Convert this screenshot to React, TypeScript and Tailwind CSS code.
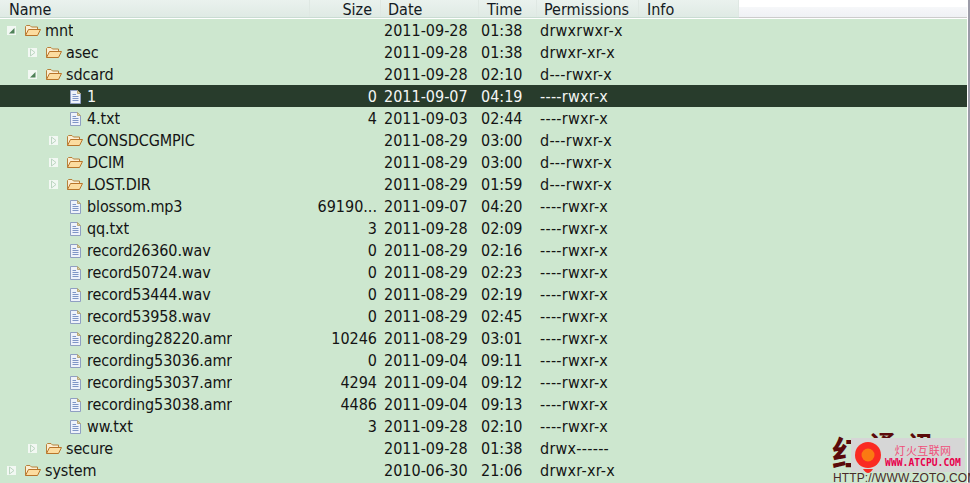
const font = { fontFamily: '"DejaVu Sans Condensed", "DejaVu Sans", "Noto Sans CJK SC", sans-serif', fontStretch: 'condensed' };

type Row = {
  name: string;
  level: number;
  kind: 'open' | 'closed' | 'file';
  size?: string;
  date: string;
  time: string;
  perm: string;
  selected?: boolean;
};

const rows: Row[] = [
  { name: 'mnt', level: 0, kind: 'open', date: '2011-09-28', time: '01:38', perm: 'drwxrwxr-x' },
  { name: 'asec', level: 1, kind: 'closed', date: '2011-09-28', time: '01:38', perm: 'drwxr-xr-x' },
  { name: 'sdcard', level: 1, kind: 'open', date: '2011-09-28', time: '02:10', perm: 'd---rwxr-x' },
  { name: '1', level: 2, kind: 'file', size: '0', date: '2011-09-07', time: '04:19', perm: '----rwxr-x', selected: true },
  { name: '4.txt', level: 2, kind: 'file', size: '4', date: '2011-09-03', time: '02:44', perm: '----rwxr-x' },
  { name: 'CONSDCGMPIC', level: 2, kind: 'closed', date: '2011-08-29', time: '03:00', perm: 'd---rwxr-x' },
  { name: 'DCIM', level: 2, kind: 'closed', date: '2011-08-29', time: '03:00', perm: 'd---rwxr-x' },
  { name: 'LOST.DIR', level: 2, kind: 'closed', date: '2011-08-29', time: '01:59', perm: 'd---rwxr-x' },
  { name: 'blossom.mp3', level: 2, kind: 'file', size: '69190...', date: '2011-09-07', time: '04:20', perm: '----rwxr-x' },
  { name: 'qq.txt', level: 2, kind: 'file', size: '3', date: '2011-09-28', time: '02:09', perm: '----rwxr-x' },
  { name: 'record26360.wav', level: 2, kind: 'file', size: '0', date: '2011-08-29', time: '02:16', perm: '----rwxr-x' },
  { name: 'record50724.wav', level: 2, kind: 'file', size: '0', date: '2011-08-29', time: '02:23', perm: '----rwxr-x' },
  { name: 'record53444.wav', level: 2, kind: 'file', size: '0', date: '2011-08-29', time: '02:19', perm: '----rwxr-x' },
  { name: 'record53958.wav', level: 2, kind: 'file', size: '0', date: '2011-08-29', time: '02:45', perm: '----rwxr-x' },
  { name: 'recording28220.amr', level: 2, kind: 'file', size: '10246', date: '2011-08-29', time: '03:01', perm: '----rwxr-x' },
  { name: 'recording53036.amr', level: 2, kind: 'file', size: '0', date: '2011-09-04', time: '09:11', perm: '----rwxr-x' },
  { name: 'recording53037.amr', level: 2, kind: 'file', size: '4294', date: '2011-09-04', time: '09:12', perm: '----rwxr-x' },
  { name: 'recording53038.amr', level: 2, kind: 'file', size: '4486', date: '2011-09-04', time: '09:13', perm: '----rwxr-x' },
  { name: 'ww.txt', level: 2, kind: 'file', size: '3', date: '2011-09-28', time: '02:10', perm: '----rwxr-x' },
  { name: 'secure', level: 1, kind: 'closed', date: '2011-09-28', time: '01:38', perm: 'drwx------' },
  { name: 'system', level: 0, kind: 'closed', date: '2010-06-30', time: '21:06', perm: 'drwxr-xr-x' },
];

function Twisty({ open }: { open: boolean }) {
  return (
    <svg width="9" height="9" viewBox="0 0 9 9" className="shrink-0">
      <rect width="9" height="9" fill="#f2f8f3" />
      {open ? (
        <path d="M7.5 2 L7.5 7.5 L2 7.5 Z" fill="#4f8258" />
      ) : (
        <path d="M2.5 1 L7 4.5 L2.5 8 Z" fill="#f2f8f3" stroke="#bcd6c1" strokeWidth="1" />
      )}
    </svg>
  );
}

function FolderIcon() {
  return (
    <svg width="16" height="11" viewBox="0 0 16 11" className="shrink-0">
      <path d="M0.5 10.5 V1.5 L1.5 0.5 H5 L6.5 2 H12.5 V4" fill="#fbeed2" stroke="#b8803a" />
      <path d="M0.5 10.5 L3.5 4.5 H15.5 L12.5 10.5 Z" fill="#fcdca0" stroke="#b8742a" strokeLinejoin="round" />
    </svg>
  );
}

function FileIcon() {
  return (
    <svg width="11" height="14" viewBox="0 0 11 14" className="shrink-0">
      <path d="M0.5 0.5 H7.5 L10.5 3.5 V13.5 H0.5 Z" fill="#eef2fa" stroke="#8f9fc2" />
      <path d="M7.5 0.5 V3.5 H10.5 Z" fill="#e0cf9f" stroke="#b8a878" />
      <path d="M2.5 4.5 H6 M2.5 6.5 H8.5 M2.5 8.5 H8.5 M2.5 10.5 H8.5" stroke="#7f96c6" />
    </svg>
  );
}

function HeaderCell({ label, className }: { label: string; className: string }) {
  return <div className={`h-full border-r border-[#dfe8e3] pt-px leading-[18px] ${className}`}>{label}</div>;
}

function TreeRow({ row }: { row: Row }) {
  const pad = row.level === 0 ? 'pl-[7px]' : row.level === 1 ? 'pl-[28px]' : 'pl-[49px]';
  return (
    <div className={`flex h-[22px] items-center pt-px text-[16px] ${row.selected ? 'bg-[#283c2c] text-[#f4f6f4]' : 'text-[#141414]'}`}>
      <div className={`flex w-[310px] shrink-0 items-center ${pad}`}>
        <div className="w-[9px] shrink-0">{row.kind !== 'file' && <Twisty open={row.kind === 'open'} />}</div>
        <div className="ml-[9px] flex w-[16px] shrink-0 justify-center">
          {row.kind === 'file' ? <FileIcon /> : <FolderIcon />}
        </div>
        <span className="ml-[4px] truncate tracking-[-0.12px]">{row.name}</span>
      </div>
      <div className="w-[67px] shrink-0 text-right">{row.size}</div>
      <div className="ml-[7px] w-[97px] shrink-0">{row.date}</div>
      <div className="w-[59px] shrink-0">{row.time}</div>
      <div className="tracking-[0.25px]">{row.perm}</div>
    </div>
  );
}

export default function App() {
  return (
    <div className="relative flex h-[483px] w-[970px] overflow-hidden bg-white" style={font}>
      <div className="w-[967px] shrink-0 bg-[#cde7cf]">
        <div className="flex h-[19px] bg-white text-[16px] text-[#141a22]">
          <div className="flex h-[18px] w-[739px] shrink-0 border-b border-[#c9dcd2] bg-gradient-to-b from-[#eaf2ee] to-[#dfeae4]">
            <HeaderCell label="Name" className="w-[310px] pl-[9px]" />
            <HeaderCell label="Size" className="w-[71px] pr-[8px] text-right" />
            <HeaderCell label="Date" className="w-[98px] pl-[7px]" />
            <HeaderCell label="Time" className="w-[58px] pl-[8px]" />
            <HeaderCell label="Permissions" className="w-[102px] pl-[7px]" />
            <HeaderCell label="Info" className="w-[100px] pl-[8px]" />
          </div>
          <div className="flex h-[18px] flex-1 flex-col">
            <div className="h-[7px] bg-white" />
            <div className="flex-1 border-b border-[#cccccc] bg-gradient-to-b from-[#f6f7f9] to-[#eff1f4]" />
          </div>
        </div>

        <div>
          {rows.map((row) => (
            <TreeRow key={row.name} row={row} />
          ))}
        </div>
      </div>
      <div className="ml-px w-[2px] bg-[#9c9ca8]" />

      {/* Watermark over the corner */}
      <div className="absolute left-[832px] top-[431px] flex items-start font-bold leading-none text-[#5a0a0a]" style={{ fontFamily: '"Noto Sans CJK SC", serif' }}>
        <span className="mt-[4px] text-[34px]">红</span>
        <span className="ml-[4px] text-[26px]">通</span>
        <span className="ml-[12px] text-[26px]">讯</span>
      </div>
      <div className="absolute left-[833px] top-[472px] whitespace-nowrap text-[12px] leading-none tracking-[0.1px] text-[#4a2a2a]" style={{ fontFamily: '"Liberation Sans", sans-serif' }}>
        HTTP://WWW.ZOTO.COM
      </div>
      <div className="absolute left-[851px] top-[438px] flex h-[34px] w-[114px] items-start bg-[#d6d6d6]">
        <svg width="26" height="37" viewBox="0 0 26 37" className="ml-[4px] mt-[3px] shrink-0">
          <circle cx="13" cy="14" r="13" fill="#fa2a22" />
          <circle cx="13" cy="14" r="6.5" fill="#fb7a12" />
          <path d="M8 28 H18 Q13 36 8 28 Z" fill="#fa2a22" />
        </svg>
        <div className="ml-[2px] mt-[6px] flex w-[80px] flex-col items-center">
          <span className="text-[11px] leading-[12px] tracking-[0.4px] text-[#f0507a]" style={{ fontFamily: '"Noto Sans CJK SC", sans-serif' }}>灯火互联网</span>
          <span className="mt-[1px] whitespace-nowrap text-[9.7px] font-bold leading-[11px] text-[#e8004c]" style={{ fontFamily: '"DejaVu Sans Mono", monospace' }}>WWW.ATCPU.COM</span>
        </div>
      </div>
    </div>
  );
}
